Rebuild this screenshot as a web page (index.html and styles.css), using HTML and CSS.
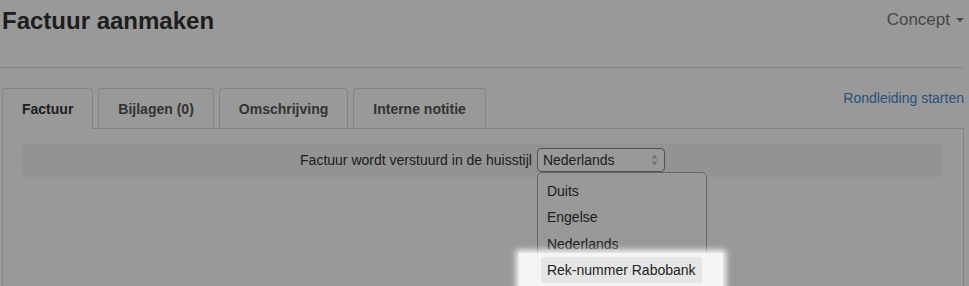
FILE: index.html
```html
<!DOCTYPE html>
<html lang="nl">
<head>
  <meta charset="UTF-8" />
  <meta name="viewport" content="width=device-width, initial-scale=1.0"/>
  <title>Factuur aanmaken</title>
  <link rel="stylesheet" href="styles.css">
</head>
<body>
  <div class="page">
    <div class="page-head">
      <h1>Factuur aanmaken</h1>
      <div class="status">Concept <span class="caret"></span></div>
    </div>
    <hr class="divider">

    <div class="tabs-row">
      <ul class="tabs">
        <li class="tab active">Factuur</li>
        <li class="tab">Bijlagen (0)</li>
        <li class="tab">Omschrijving</li>
        <li class="tab">Interne notitie</li>
      </ul>
      <a href="#" class="tour-link">Rondleiding starten</a>
    </div>

    <div class="tab-panel">
      <div class="well">
        <span class="well-label">Factuur wordt verstuurd in de huisstijl</span>
        <div class="select-wrap">
          <div class="select-box">
            <span>Nederlands</span>
            <svg class="spinner" width="7" height="12" viewBox="0 0 7 12">
              <path d="M0.5 4.5 L3.5 0.5 L6.5 4.5 Z" fill="#bbb"/>
              <path d="M0.5 7.5 L3.5 11.5 L6.5 7.5 Z" fill="#bbb"/>
            </svg>
          </div>
          <ul class="dropdown">
            <li class="option">Duits</li>
            <li class="option">Engelse</li>
            <li class="option">Nederlands</li>
            <li class="option selected">Rek-nummer Rabobank</li>
          </ul>
        </div>
      </div>
    </div>
  </div>

  <div class="overlay"></div>
  <div class="helper"></div>
</body>
</html>
```

FILE: styles.css
```css
* {
  margin: 0;
  padding: 0;
  box-sizing: border-box;
}

body {
  font-family: 'Liberation Sans', Arial, sans-serif;
  font-size: 14px;
  color: #333;
  background-color: #fff;
  overflow: hidden;
}

.page {
  width: 962px;
  margin-left: 2px;
}

.page-head {
  display: flex;
  justify-content: space-between;
  align-items: flex-start;
  height: 67px;
}

h1 {
  font-size: 24px;
  line-height: 30px;
  font-weight: bold;
  margin-top: 6px;
  color: #333;
}

.status {
  font-size: 17px;
  line-height: 24px;
  margin-top: 8px;
  color: #777;
  display: flex;
  align-items: center;
}

.caret {
  display: inline-block;
  margin-left: 6px;
  border-top: 4px solid #777;
  border-left: 4px solid transparent;
  border-right: 4px solid transparent;
}

.divider {
  border: none;
  border-top: 1px solid #e0e0e0;
  margin: 0 0 20px -2px;
  width: 964px;
}

.tabs-row {
  display: flex;
  justify-content: space-between;
  align-items: flex-start;
}

.tabs {
  list-style: none;
  display: flex;
  align-items: flex-end;
}

.tab {
  border: 1px solid #ddd;
  border-bottom: 0;
  border-radius: 4px 4px 0 0;
  padding: 10px 19px 9px;
  line-height: 20px;
  font-weight: bold;
  color: #555;
  margin-right: 5px;
  background-color: #fff;
}

.tab.active {
  color: #333;
  padding-bottom: 10px;
  margin-bottom: -1px;
  position: relative;
}

.tour-link {
  color: #428bca;
  text-decoration: none;
  line-height: 20px;
}

.tab-panel {
  border: 1px solid #ddd;
  padding: 15px 20px 0 19px;
  min-height: 200px;
}

.well {
  background-color: #f5f5f5;
  border-radius: 4px;
  height: 33px;
  padding: 4px 0 5px;
  display: flex;
  justify-content: center;
  align-items: center;
}

.well-label {
  margin-right: 5px;
}

.select-wrap {
  position: relative;
}

.select-box {
  width: 128px;
  height: 24px;
  border: 1px solid #888;
  border-radius: 4px;
  padding: 0 6px 0 5px;
  display: flex;
  align-items: center;
  justify-content: space-between;
  background-color: #fff;
}

.dropdown {
  list-style: none;
  position: absolute;
  top: 24px;
  left: 0;
  width: 170px;
  height: 140px;
  border: 1px solid #aaa;
  border-radius: 5px;
  padding-top: 5px;
  background-color: #fff;
}

.option {
  margin: 0 4px 0 3px;
  padding: 0 6px;
  line-height: 26.3px;
  height: 26.3px;
  border-radius: 3px;
}

.option.selected {
  background-color: #e5e5e5;
  color: #222;
  position: relative;
  z-index: 12;
}

/* tour overlay */
.overlay {
  position: fixed;
  top: 0;
  left: 0;
  right: 0;
  bottom: 0;
  background-color: rgba(0, 0, 0, 0.4);
  z-index: 10;
}

.helper {
  position: absolute;
  left: 519px;
  top: 253px;
  width: 204px;
  height: 60px;
  background-color: rgba(255, 255, 255, 0.9);
  box-shadow: 0 0 6px 3px rgba(255, 255, 255, 0.9);
  z-index: 11;
}
```
